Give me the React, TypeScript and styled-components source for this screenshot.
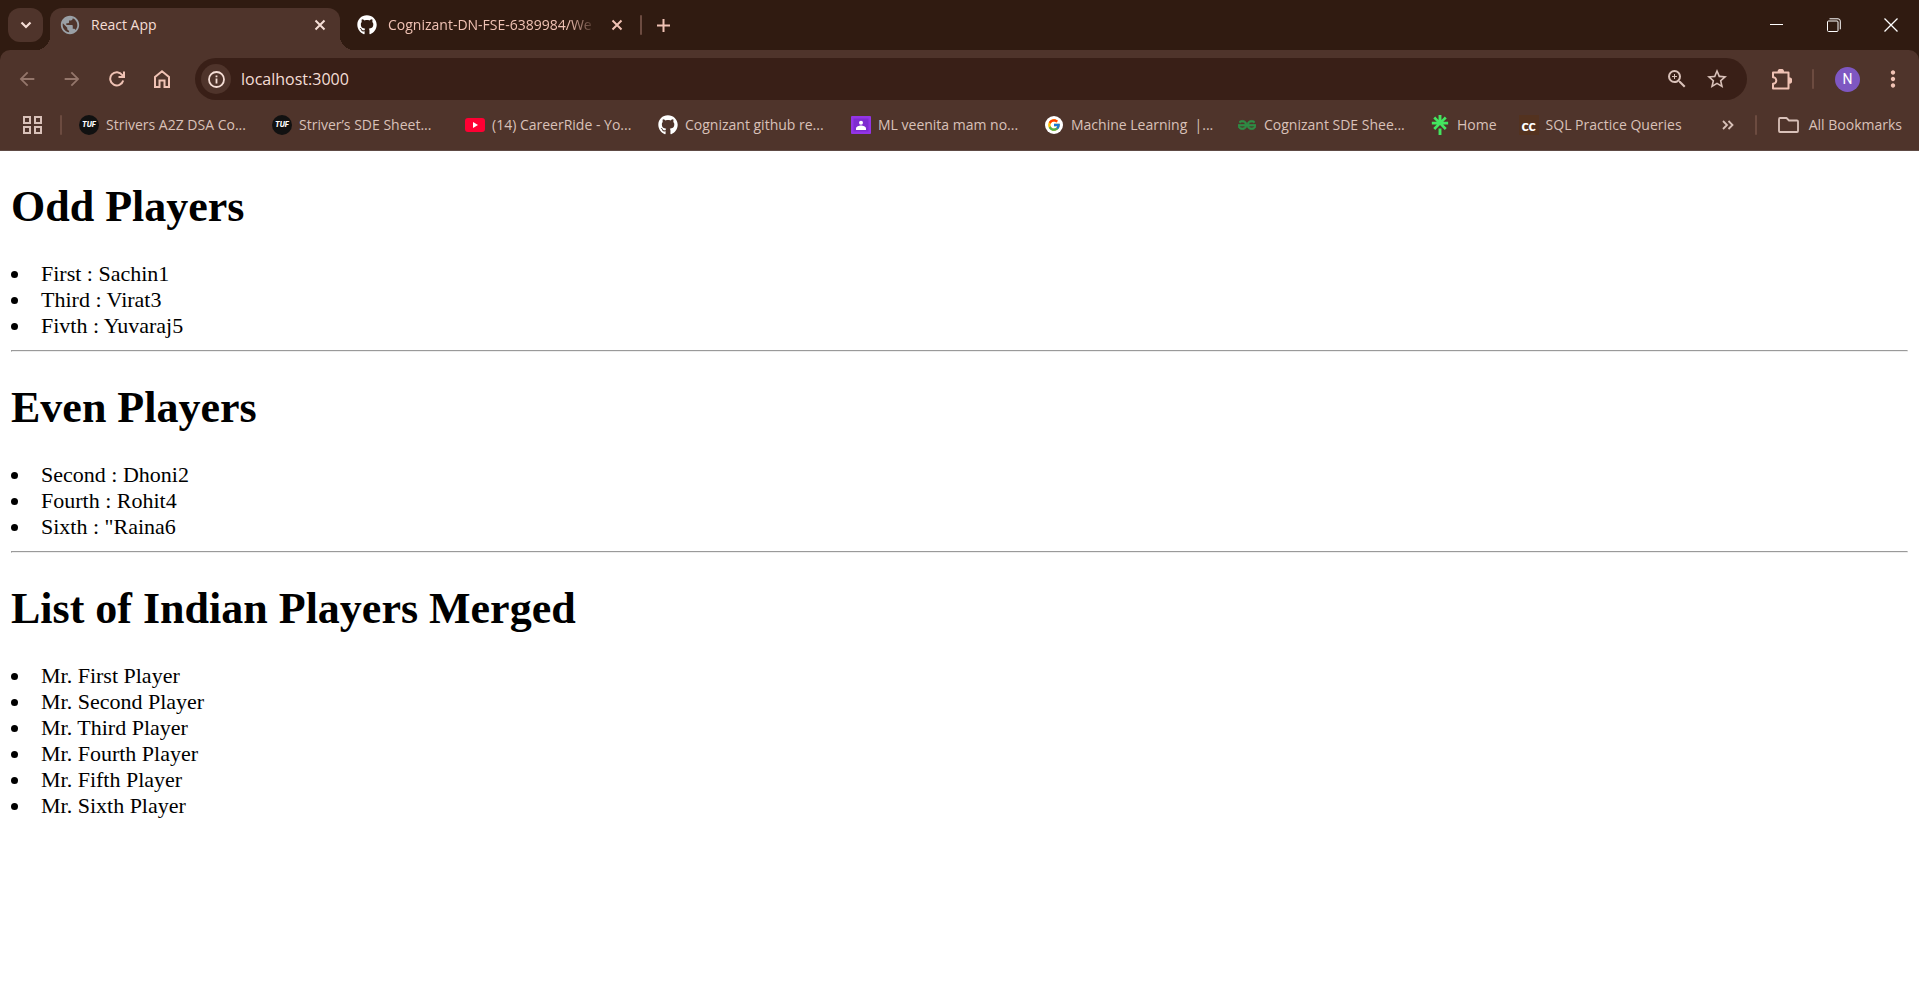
import React from "react";
import styled, { createGlobalStyle, css } from "styled-components";
import { FaGithub } from "react-icons/fa";
import { FcGoogle } from "react-icons/fc";
import { SiGeeksforgeeks, SiLinktree } from "react-icons/si";
import { MdArrowBack, MdArrowForward, MdPublic, MdZoomIn, MdStarBorder, MdMoreVert } from "react-icons/md";

const color = {
  strip: "#301b11",
  toolbar: "#4f342b",
  field: "#391f17",
  text: "#f5ded6",
  accent: "#f0c2b4",
  soft: "#d9c1b9",
  dim: "#94766b",
  divider: "#6c4b40",
};

const GlobalStyle = createGlobalStyle`
  *, *::before, *::after { box-sizing: border-box; }
  body { margin: 0; background: #fff; }
  button { border: 0; padding: 0; margin: 0; background: none; color: inherit; font: inherit; }
  svg { display: block; flex: none; }
`;

const Chrome = styled.header`
  font-family: "Open Sans", "Noto Sans", sans-serif;
  font-size: 14px;
  line-height: 20px;
  background: ${color.strip};
  color: ${color.text};
  white-space: nowrap;
`;

const TabStrip = styled.div`
  display: flex;
  align-items: flex-start;
  height: 50px;
  padding-top: 8px;
  padding-left: 8px;
`;

const center = css`
  display: flex;
  align-items: center;
  justify-content: center;
`;

const TabSearch = styled.button`
  ${center}
  width: 35px;
  height: 34px;
  margin-right: 7px;
  border-radius: 12px;
  background: ${color.toolbar};
`;

const Tab = styled.div<{ $active?: boolean }>`
  position: relative;
  display: flex;
  align-items: center;
  width: ${(p) => (p.$active ? 290 : 300)}px;
  height: 42px;
  padding: 0 ${(p) => (p.$active ? 8 : 11)}px 8px ${(p) => (p.$active ? 10 : 17)}px;
  color: ${(p) => (p.$active ? color.text : color.accent)};
  ${(p) =>
    p.$active &&
    css`
      background: ${color.toolbar};
      border-radius: 12px 12px 0 0;
      &::before,
      &::after {
        content: "";
        position: absolute;
        bottom: 0;
        width: 14px;
        height: 14px;
      }
      &::before {
        right: 100%;
        background: radial-gradient(circle at 0 0, transparent 14px, ${color.toolbar} 14px);
      }
      &::after {
        left: 100%;
        background: radial-gradient(circle at 100% 0, transparent 14px, ${color.toolbar} 14px);
      }
    `}
`;

const TabTitle = styled.span<{ $fade?: boolean }>`
  flex: 1;
  min-width: 0;
  overflow: hidden;
  margin-left: 11px;
  ${(p) =>
    p.$fade &&
    css`
      mask-image: linear-gradient(to right, #000 calc(100% - 28px), transparent);
    `}
`;

const TabClose = styled.button`
  ${center}
  width: 24px;
  height: 24px;
  margin-left: 8px;
`;

const Divider = styled.span<{ $left?: number; $right?: number }>`
  flex: none;
  width: 2px;
  height: 20px;
  border-radius: 1px;
  margin-left: ${(p) => p.$left ?? 0}px;
  margin-right: ${(p) => p.$right ?? 0}px;
  background: ${color.divider};
`;

const StripEnd = styled.div`
  display: flex;
  align-items: center;
  height: 34px;
  color: ${color.accent};
`;

const NewTab = styled.button`
  ${center}
  width: 34px;
  height: 34px;
  margin-left: 4px;
`;

const WindowControls = styled.div`
  display: flex;
  margin-left: auto;
  margin-top: -8px;
  color: #fff;
`;

const WindowButton = styled.button`
  ${center}
  width: 57px;
  height: 50px;
`;

const Panel = styled.div`
  background: ${color.toolbar};
  border-radius: 10px 10px 0 0;
  border-bottom: 1px solid #5e4a44;
`;

const Toolbar = styled.nav`
  display: flex;
  align-items: center;
  height: 58px;
  padding: 0 4px;
  color: ${color.accent};
`;

const ToolButton = styled.button`
  ${center}
  width: 45px;
  height: 42px;
  &:disabled { color: ${color.dim}; }
`;

const AddressBar = styled.div`
  display: flex;
  align-items: center;
  flex: 1;
  height: 42px;
  margin: 0 12px 0 11px;
  padding: 0 10px 0 6px;
  border-radius: 21px;
  background: ${color.field};
  color: ${color.soft};
`;

const SiteInfo = styled.button`
  ${center}
  width: 30px;
  height: 30px;
  border-radius: 15px;
  background: ${color.toolbar};
  color: ${color.text};
`;

const Address = styled.input`
  flex: 1;
  min-width: 0;
  margin-left: 10px;
  padding: 0;
  border: 0;
  outline: 0;
  background: none;
  color: ${color.text};
  font: 16px/24px "Open Sans", "Noto Sans", sans-serif;
`;

const FieldButton = styled.button`
  ${center}
  width: 40px;
  height: 40px;
`;

const Avatar = styled.span`
  ${center}
  width: 25px;
  height: 25px;
  border-radius: 13px;
  background: #7e57c2;
  color: #fff;
  font-family: Roboto, sans-serif;
`;

const BookmarkBar = styled.nav`
  display: flex;
  align-items: center;
  height: 34px;
  margin-bottom: 8px;
  padding: 0 17px 0 23px;
  color: ${color.soft};
`;

const AppsButton = styled.button`
  ${center}
  width: 19px;
  height: 20px;
`;

const Bookmark = styled.a<{ $fixed?: boolean }>`
  display: flex;
  align-items: center;
  flex: none;
  gap: 7px;
  width: ${(p) => (p.$fixed ? "193px" : "auto")};
  margin-right: ${(p) => (p.$fixed ? 0 : 22)}px;
  color: inherit;
  text-decoration: none;
  white-space: pre;
`;

const IconSlot = styled.span`
  ${center}
  flex: none;
  width: 20px;
  height: 20px;
`;

const TufBadge = styled(IconSlot)`
  border-radius: 10px;
  background: #111;
  color: #fff;
  font: italic 800 7px/20px Inter, sans-serif;
`;

const CcBadge = styled(IconSlot)`
  background: #53321f;
  color: #fff;
  font: 900 15px/18px Lato, sans-serif;
`;

const GoogleBadge = styled(IconSlot)`
  width: 18px;
  height: 18px;
  margin: 0 1px;
  border-radius: 9px;
  background: #fff;
`;

const Overflow = styled.div`
  display: flex;
  align-items: center;
  margin-left: auto;
`;

const FolderButton = styled.button`
  display: flex;
  align-items: center;
  gap: 10px;
`;

const Page = styled.main`
  padding: 0 11px;
  overflow: hidden;
  background: #fff;
  color: #000;
  font: 22px/26px "Liberation Serif", "Times New Roman", serif;
`;

const Heading = styled.h1`
  margin: 30px 0 28px;
  font-size: 44px;
  line-height: 52px;
`;

const PlayerList = styled.ul`
  margin: 0;
  padding: 0;
  list-style: disc inside;
`;

const Rule = styled.hr`
  margin: 11px 0;
`;

const CloseIcon = () => (
  <svg width="12" height="12" viewBox="0 0 12 12" stroke="currentColor" strokeWidth="2">
    <path d="M1.5 1.5l9 9M10.5 1.5l-9 9" />
  </svg>
);

const Tuf = () => <TufBadge>TUF</TufBadge>;

const YouTube = () => (
  <svg width="20" height="14" viewBox="0 0 20 14">
    <rect width="20" height="14" rx="3" fill="#ff0033" />
    <path d="M8 4l5 3-5 3z" fill="#fff" />
  </svg>
);

const Classroom = () => (
  <svg width="20" height="18" viewBox="0 0 20 18">
    <rect width="20" height="18" rx="1" fill="#9334e6" />
    <rect x="2.5" y="2.5" width="15" height="13" fill="#7f2bd0" />
    <circle cx="10" cy="6.7" r="2" fill="#fff" />
    <path d="M5 14v-1.500c0-2 3-3 5-3s5 1 5 3v1.500z" fill="#fff" />
  </svg>
);

const bookmarks = [
  { icon: <Tuf />, label: "Strivers A2Z DSA Co..." },
  { icon: <Tuf />, label: "Striver’s SDE Sheet..." },
  { icon: <YouTube />, label: "(14) CareerRide - Yo..." },
  { icon: <FaGithub size={20} color="#fff" />, label: "Cognizant github re..." },
  { icon: <Classroom />, label: "ML veenita mam no..." },
  { icon: <GoogleBadge><FcGoogle size={14} /></GoogleBadge>, label: "Machine Learning  |..." },
  { icon: <SiGeeksforgeeks size={18} color="#2f8d46" stroke="#2f8d46" strokeWidth={1} />, label: "Cognizant SDE Shee..." },
];

const sections = [
  { title: "Odd Players", items: ["First : Sachin1", "Third : Virat3", "Fivth : Yuvaraj5"] },
  { title: "Even Players", items: ["Second : Dhoni2", "Fourth : Rohit4", 'Sixth : "Raina6'] },
  {
    title: "List of Indian Players Merged",
    items: ["First", "Second", "Third", "Fourth", "Fifth", "Sixth"].map((n) => `Mr. ${n} Player`),
  },
];

export default function App() {
  return (
    <>
      <GlobalStyle />
      <Chrome>
        <TabStrip>
          <TabSearch aria-label="Search tabs">
            <svg width="12" height="8" viewBox="0 0 12 8" fill="none" stroke="currentColor" strokeWidth="2.200">
              <path d="M1.500 1.500L6 6l4.500-4.500" />
            </svg>
          </TabSearch>
          <Tab $active>
            <IconSlot><MdPublic size={22} color="#9aa0a6" /></IconSlot>
            <TabTitle>React App</TabTitle>
            <TabClose aria-label="Close React App"><CloseIcon /></TabClose>
          </Tab>
          <Tab>
            <FaGithub size={20} color="#fff" />
            <TabTitle $fade>Cognizant-DN-FSE-6389984/We</TabTitle>
            <TabClose aria-label="Close Cognizant tab"><CloseIcon /></TabClose>
          </Tab>
          <StripEnd>
            <Divider />
            <NewTab aria-label="New tab">
              <svg width="13" height="13" viewBox="0 0 13 13" stroke="currentColor" strokeWidth="2">
                <path d="M6.500 0v13M0 6.500h13" />
              </svg>
            </NewTab>
          </StripEnd>
          <WindowControls>
            <WindowButton aria-label="Minimize">
              <svg width="13" height="13" viewBox="0 0 13 13" stroke="currentColor"><path d="M0 5.500h13" /></svg>
            </WindowButton>
            <WindowButton aria-label="Restore">
              <svg width="14" height="14" viewBox="0 0 14 14" fill="none" stroke="currentColor">
                <rect x=".5" y="3" width="10.500" height="10.500" rx="1" />
                <path d="M2.500 .8h8.500q2.300 0 2.300 2.300v8.200" />
              </svg>
            </WindowButton>
            <WindowButton aria-label="Close">
              <svg width="14" height="14" viewBox="0 0 14 14" stroke="currentColor" strokeWidth="1.300"><path d="M.5 .5l13 13M13.500 .5l-13 13" /></svg>
            </WindowButton>
          </WindowControls>
        </TabStrip>
        <Panel>
          <Toolbar aria-label="Navigation">
            <ToolButton disabled aria-label="Back"><MdArrowBack size={22} /></ToolButton>
            <ToolButton disabled aria-label="Forward"><MdArrowForward size={22} /></ToolButton>
            <ToolButton aria-label="Reload">
              <svg width="16" height="16" viewBox="0 0 16 16" fill="none" stroke="currentColor" strokeWidth="2">
                <path d="M14.200 9.500A6.600 6.600 0 1 1 13.200 4L15 6M15 .5V6H9.500" />
              </svg>
            </ToolButton>
            <ToolButton aria-label="Home">
              <svg width="16" height="18" viewBox="0 0 16 18" fill="none" stroke="currentColor" strokeWidth="2">
                <path d="M1 17V7l7-5.700L15 7v10h-4.500v-6.500h-5V17z" />
              </svg>
            </ToolButton>
            <AddressBar>
              <SiteInfo aria-label="Site information">
                <svg width="17" height="17" viewBox="0 0 17 17" fill="none" stroke="currentColor" strokeWidth="1.800">
                  <circle cx="8.500" cy="8.500" r="7.500" />
                  <path d="M8.500 7.500v5M8.500 4.500v1.800" />
                </svg>
              </SiteInfo>
              <Address aria-label="Address" defaultValue="localhost:3000" />
              <FieldButton aria-label="Zoom"><MdZoomIn size={24} /></FieldButton>
              <FieldButton aria-label="Bookmark this tab"><MdStarBorder size={24} /></FieldButton>
            </AddressBar>
            <ToolButton aria-label="Extensions">
              <svg width="21" height="21" viewBox="0 0 21 21" fill="none" stroke="currentColor" strokeWidth="2" strokeLinejoin="round">
                <path d="M2 3.500h15.500v16H2v-4.700a3.300 3.300 0 0 0 0-6.600z" />
                <path d="M7.500 3a2.300 2.300 0 0 1 4.600 0zM18 9.200a2.300 2.300 0 0 1 0 4.600z" fill="currentColor" />
              </svg>
            </ToolButton>
            <Divider $left={8} $right={11} />
            <ToolButton aria-label="Profile"><Avatar>N</Avatar></ToolButton>
            <ToolButton aria-label="Menu"><MdMoreVert size={26} /></ToolButton>
          </Toolbar>
          <BookmarkBar aria-label="Bookmarks">
            <AppsButton aria-label="Apps">
              <svg width="19" height="18" viewBox="0 0 19 18" fill="none" stroke="currentColor" strokeWidth="2">
                <path d="M1 1h6v6H1zM12 1h6v6h-6zM1 11h6v6H1zM12 11h6v6h-6z" />
              </svg>
            </AppsButton>
            <Divider $left={18} $right={17} />
            {bookmarks.map((b) => (
              <Bookmark $fixed href="#" key={b.label}>
                <IconSlot>{b.icon}</IconSlot>
                {b.label}
              </Bookmark>
            ))}
            <Bookmark href="#">
              <IconSlot><SiLinktree size={20} color="#43e660" /></IconSlot>
              Home
            </Bookmark>
            <Bookmark href="#">
              <CcBadge>cc</CcBadge>
              SQL Practice Queries
            </Bookmark>
            <Overflow>
              <button aria-label="More bookmarks">
                <svg width="12" height="10" viewBox="0 0 12 10" fill="none" stroke="currentColor" strokeWidth="1.800">
                  <path d="M1 1l4 4-4 4M6.500 1l4 4-4 4" />
                </svg>
              </button>
              <Divider $left={21} $right={21} />
              <FolderButton>
                <svg width="21" height="16" viewBox="0 0 21 16" fill="none" stroke="currentColor" strokeWidth="1.800" strokeLinejoin="round">
                  <path d="M1 2.500V14q0 1 1 1h17q1 0 1-1V4.500q0-1-1-1h-8L8.500 1H2Q1 1 1 2.500z" />
                </svg>
                All Bookmarks
              </FolderButton>
            </Overflow>
          </BookmarkBar>
        </Panel>
      </Chrome>
      <Page>
        {sections.map((s, i) => (
          <React.Fragment key={s.title}>
            {i > 0 && <Rule />}
            <Heading>{s.title}</Heading>
            <PlayerList>
              {s.items.map((t) => (
                <li key={t}>{t}</li>
              ))}
            </PlayerList>
          </React.Fragment>
        ))}
      </Page>
    </>
  );
}
